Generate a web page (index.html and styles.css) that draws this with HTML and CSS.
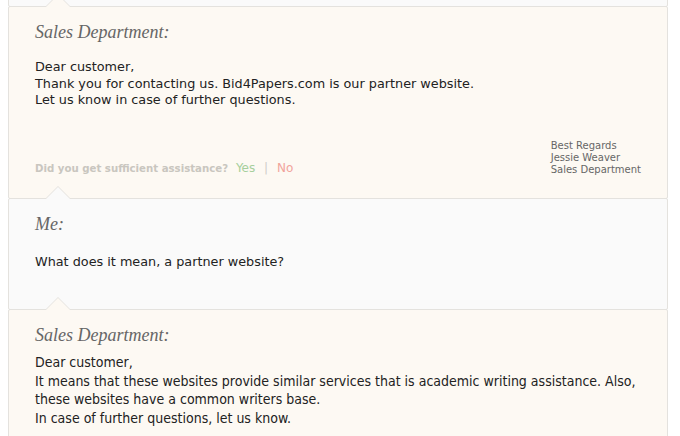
FILE: index.html
```html
<!DOCTYPE html>
<html>
<head>
<meta charset="utf-8">
<link rel="stylesheet" href="styles.css">
</head>
<body>
<div class="thread">
  <div class="msg msg-me msg-prev"></div>

  <div class="msg msg-sales msg-first">
    <div class="author">Sales Department:</div>
    <div class="text">
      Dear customer,<br>
      Thank you for contacting us. Bid4Papers.com is our partner website.<br>
      Let us know in case of further questions.
    </div>
    <div class="foot">
      <div class="rate">
        <span class="q">Did you get sufficient assistance?</span>
        <span class="yes">Yes</span>
        <span class="sep">|</span>
        <span class="no">No</span>
      </div>
      <div class="sign">Best Regards<br>Jessie Weaver<br>Sales Department</div>
    </div>
  </div>

  <div class="msg msg-me">
    <div class="author">Me:</div>
    <div class="text text-me">What does it mean, a partner website?</div>
  </div>

  <div class="msg msg-sales">
    <div class="author">Sales Department:</div>
    <div class="text text-alt">
      Dear customer,<br>
      It means that these websites provide similar services that is academic writing assistance. Also, these websites have a common writers base.<br>
      In case of further questions, let us know.
    </div>
  </div>
</div>
</body>
</html>
```

FILE: styles.css
```css
html, body {
  margin: 0;
  padding: 0;
  background: #ffffff;
  overflow: hidden;
}

.thread {
  width: 660px;
  margin: -15px 0 0 8px;
}

.msg {
  position: relative;
  box-sizing: border-box;
  border: 1px solid #e4e2de;
  border-radius: 2px;
  margin-top: -1px;
  padding: 14px 26px 0 26px;
}

.msg-prev {
  height: 22px;
  margin-top: 0;
}

.msg-sales { background: #fdf9f3; }
.msg-me { background: #fafafa; }

.msg:not(.msg-prev)::before,
.msg:not(.msg-prev)::after {
  content: "";
  position: absolute;
  left: 36px;
  width: 0;
  height: 0;
  border-style: solid;
}
.msg:not(.msg-prev)::before {
  top: -13px;
  border-width: 0 13px 13px 13px;
  border-color: transparent transparent #e4e2de transparent;
}
.msg:not(.msg-prev)::after {
  top: -12px;
  left: 37px;
  border-width: 0 12px 12px 12px;
}
.msg-sales::after { border-color: transparent transparent #fdf9f3 transparent; }
.msg-me::after { border-color: transparent transparent #fafafa transparent; }

.author {
  font-family: "Liberation Serif", serif;
  font-style: italic;
  font-size: 18px;
  line-height: 22px;
  color: #666;
}

.text {
  margin-top: 16px;
  font-family: "DejaVu Sans", sans-serif;
  font-size: 12.8px;
  line-height: 16.5px;
  color: #222;
}

.text-me {
  margin-top: 19px;
  padding-bottom: 39px;
}

.text-alt {
  margin-top: 7px;
  margin-right: -8px;
  font-family: "DejaVu Sans Condensed", "DejaVu Sans", sans-serif;
  font-stretch: condensed;
  font-size: 14px;
  line-height: 18.5px;
  padding-bottom: 22px;
}

.foot {
  display: flex;
  justify-content: space-between;
  align-items: flex-end;
  margin-top: 31px;
  padding-bottom: 22px;
}

.rate {
  font-family: "DejaVu Sans", sans-serif;
  font-size: 12px;
  line-height: 14px;
}
.rate .q {
  font-weight: bold;
  font-size: 10.2px;
  color: #c9c6bf;
  margin-right: 4px;
}
.rate .yes { color: #a6cf9c; }
.rate .sep { color: #cfcdc8; margin: 0 5px; }
.rate .no { color: #f1a49b; }

.sign {
  font-family: "DejaVu Sans", sans-serif;
  font-size: 10px;
  line-height: 12px;
  color: #666;
}
```
